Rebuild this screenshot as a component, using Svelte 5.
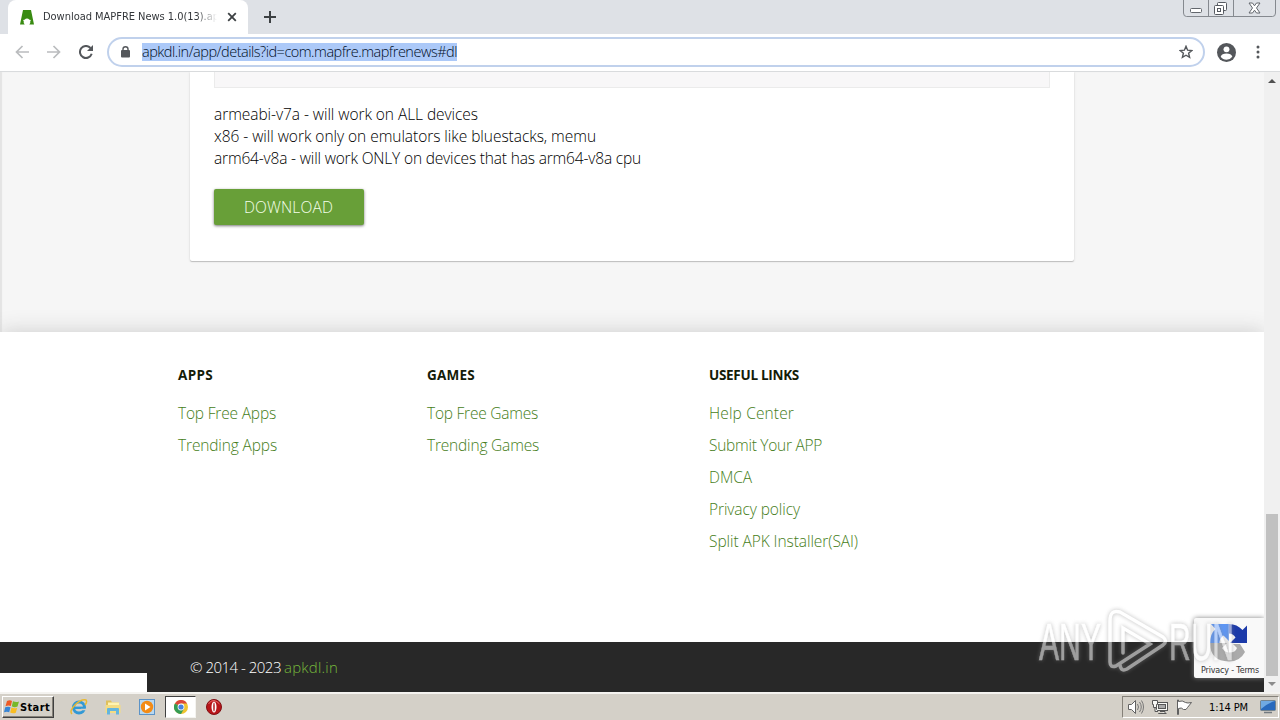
<script>
    const notes = [
        { text: "armeabi-v7a - will work on ALL devices", width: 264 },
        { text: "x86 - will work only on emulators like bluestacks, memu", width: 382 },
        { text: "arm64-v8a - will work ONLY on devices that has arm64-v8a cpu", width: 427 }
    ]

    const columns = [
        {
            title: "APPS",
            titleWidth: 35,
            links: [
                { text: "Top Free Apps", width: 98 },
                { text: "Trending Apps", width: 99 }
            ]
        },
        {
            title: "GAMES",
            titleWidth: 48,
            links: [
                { text: "Top Free Games", width: 111 },
                { text: "Trending Games", width: 112 }
            ]
        },
        {
            title: "USEFUL LINKS",
            titleWidth: 90,
            links: [
                { text: "Help Center", width: 85 },
                { text: "Submit Your APP", width: 113 },
                { text: "DMCA", width: 43 },
                { text: "Privacy policy", width: 91 },
                { text: "Split APK Installer(SAI)", width: 149 }
            ]
        }
    ]

    // spreads the letters so the text fills the given width
    function fit(node, width) {
        const natural = node.getBoundingClientRect().width
        node.style.letterSpacing = `${(width - natural) / node.textContent.length}px`
    }
</script>

<div class="screen">
    <header class="tabStrip">
        <div class="tab">
            <svg class="favicon" width="14" height="15" viewBox="0 0 14 15"><path d="M3 0h8l3 14.500H9.300q1.400-1.500 1-3.500l.7-1-1.500-.3Q7 7.500 4.500 9.700L3 10l.7 1q-.4 2 1 3.500H0z" fill="#398b12" /></svg>
            <div class="tabTitle"><span use:fit={176}>Download MAPFRE News 1.0(13).ap</span></div>
            <svg class="tabClose" width="10" height="10" viewBox="0 0 10 10"><path d="M1.200 1.200l7.600 7.600M8.800 1.200L1.200 8.800" stroke="#3c4043" stroke-width="1.800" /></svg>
        </div>
        <svg class="newTab" width="12" height="12" viewBox="0 0 12 12"><path d="M6 0v12M0 6h12" stroke="#3c4043" stroke-width="2" /></svg>
        <div class="windowButtons">
            <svg width="93" height="17" viewBox="0 0 93 17" fill="none" stroke="#85898f">
                <path d="M.5 0v13q0 3.500 3 3.500h86q3 0 3-3.500V0M25.500 0v16.500M50.500 0v16.500" />
                <rect x="7.500" y="8.500" width="11" height="4" rx="1" stroke="#63676d" fill="#fff" />
                <g stroke="#555960" fill="#fff"><rect x="34.500" y="2.500" width="9" height="8" rx="1" /><rect x="31.500" y="5.500" width="9" height="9" rx="1" /><rect x="34.500" y="8.500" width="3" height="3" /></g>
                <path d="M66 3h3.500l2 2.800 2-2.800H77l-3.500 5 3.500 5h-3.500l-2-2.800-2 2.800H66l3.500-5z" fill="#fff" stroke="#63676d" />
            </svg>
        </div>
    </header>

    <div class="toolbar">
        <svg class="nav" width="14" height="14" viewBox="0 0 14 14" fill="none" stroke="#babcbe" stroke-width="1.700"><path d="M14 7H1.500M7.500 1L1.500 7l6 6" /></svg>
        <svg class="nav" width="14" height="14" viewBox="0 0 14 14" fill="none" stroke="#babcbe" stroke-width="1.700"><path d="M0 7h12.500M6.500 1l6 6-6 6" /></svg>
        <svg class="reload" width="14" height="14" viewBox="0 0 14 14"><path d="M11.500 3A6 6 0 1 0 12.700 8.800" fill="none" stroke="#54575b" stroke-width="2" /><path d="M14 0v6H8z" fill="#54575b" /></svg>
        <div class="addressBar">
            <svg width="9" height="12" viewBox="0 0 9 12"><rect x="0" y="4" width="9" height="7.500" rx="1" fill="#54575b" /><path d="M2 5V3q0-2.300 2.500-2.300T7 3v2" fill="none" stroke="#54575b" stroke-width="1.400" /></svg>
            <span class="url" use:fit={315}>apkdl.in/app/details?id=com.mapfre.mapfrenews#dl</span>
            <svg class="star" width="14" height="14" viewBox="0 0 14 14"><path d="M7 1.300l1.600 3.900 4.200.3-3.200 2.700 1 4.200L7 10.200l-3.600 2.200 1-4.200-3.200-2.700 4.200-.3z" fill="none" stroke="#54575b" stroke-width="1.400" /></svg>
        </div>
        <svg class="profile" width="19" height="19" viewBox="0 0 18 18"><circle cx="9" cy="9" r="9" fill="#54575b" /><circle cx="9" cy="6" r="2.800" fill="#fff" /><path d="M3.500 13q1-3 5.500-3t5.500 3Q12.500 15.800 9 15.800T3.500 13" fill="#fff" /></svg>
        <svg class="menu" width="4" height="14" viewBox="0 0 4 14" fill="#54575b"><circle cx="2" cy="2" r="1.500" /><circle cx="2" cy="7" r="1.500" /><circle cx="2" cy="12" r="1.500" /></svg>
    </div>

    <div class="viewport">
        <main class="page">
            <div class="cardArea">
                <section class="card">
                    <div class="panelEnd"></div>
                    <div class="notes">
                        {#each notes as note}
                            <div><span use:fit={note.width}>{note.text}</span></div>
                        {/each}
                    </div>
                    <button class="download"><span use:fit={89}>DOWNLOAD</span></button>
                </section>
            </div>
            <footer>
                <div class="footerLinks">
                    {#each columns as column}
                        <div class="column">
                            <h6><span use:fit={column.titleWidth}>{column.title}</span></h6>
                            {#each column.links as link}
                                <div class="link"><span use:fit={link.width}>{link.text}</span></div>
                            {/each}
                        </div>
                    {/each}
                </div>
                <div class="copyright">
                    <span use:fit={91}>© 2014 - 2023</span>
                    <span class="site" use:fit={54}>apkdl.in</span>
                </div>
            </footer>
            <div class="statusBubble"></div>
            <div class="captcha">
                <svg width="38" height="38" viewBox="0 0 38 38">
                    <path d="M19 0q8 0 13.500 6L37 1.500V19H20l5.500-5.500Q23 9.500 19 9.500z" fill="#1c3aa9" />
                    <path d="M19 0v17l-5.500-5.500Q9.500 14 9.500 19H0Q0 10 5.500 5L1 0z" fill="#4285f4" opacity=".85" />
                    <path d="M0 19h17l-5 5q3 4.500 7.500 4.500 6 0 7.500-4.500l-4-4h7l5 8Q30 37.500 19 37.500 0 37 0 19" fill="#ababab" />
                </svg>
                <div class="terms"><span use:fit={58}>Privacy - Terms</span></div>
            </div>
        </main>
        <aside class="scrollbar">
            <svg width="8" height="4" viewBox="0 0 8 4"><path d="M0 4l4-4 4 4z" fill="#505050" /></svg>
            <div class="thumb"></div>
            <svg width="8" height="4" viewBox="0 0 8 4"><path d="M0 0l4 4 4-4z" fill="#8b8b8b" /></svg>
        </aside>
    </div>

    <div class="taskbar">
        <div class="start">
            <svg width="16" height="15" viewBox="0 0 16 15"><path d="M3 1q3-1.500 5 0L6.800 6Q4.500 5 1.500 6.200z" fill="#ee5a24" /><path d="M9 1.300q3 1.300 6 .2l-1.500 5Q10.500 8 7.800 6.300z" fill="#77b82a" /><path d="M1.200 7.300q3-1.300 5.300 0l-1.300 5Q3 11 0 12.300z" fill="#3785d5" /><path d="M7.500 7.600q3 1.400 5.700.2l-1.400 5q-3 1.200-5.600-.3z" fill="#f9bd22" /></svg>
            <span use:fit={30}>Start</span>
        </div>
        <div class="quickLaunch">
            <svg width="18" height="18" viewBox="0 0 18 18"><circle cx="9" cy="9.500" r="5.500" fill="none" stroke="#3299d5" stroke-width="3" /><path d="M5 9.800h10" stroke="#3299d5" stroke-width="2.400" /><path d="M11 11.500h6" stroke="#d4d0c8" stroke-width="1.500" /><path d="M2 16Q-1 13 5 7T16 2q1.500 2-1 5" fill="none" stroke="#e9b931" stroke-width="1.500" /></svg>
            <svg width="18" height="18" viewBox="0 0 18 18"><path d="M2 2.500h5l1 2h7v10H2z" fill="#dfc05c" /><path d="M4 4.500h11v5H4z" fill="#fff3b1" /><path d="M1.500 7h15v8h-15z" fill="#f4dc83" /><path d="M3 16.500V11q0-1 1-1h10q1 0 1 1v5.500h-3V13H6v3.500z" fill="#64b5de" /></svg>
            <svg width="18" height="18" viewBox="0 0 18 18"><rect x="1.500" y="1.500" width="15" height="15" fill="#b8d8f1" stroke="#5c93c7" /><circle cx="9" cy="9" r="6.200" fill="#f38b16" /><path d="M7 5.500l5.500 3.500L7 12.500z" fill="#fff" /></svg>
            <div class="active">
                <svg width="14" height="14" viewBox="0 0 14 14"><circle cx="7" cy="7" r="7" fill="#efc431" /><path d="M7 7L.9 3.500A7 7 0 0 1 13.100 3.500H7z" fill="#db463a" /><path d="M.9 3.500A7 7 0 0 0 7 14l3-5.300L7 7z" fill="#359c54" /><circle cx="7" cy="7" r="3.400" fill="#fff" /><circle cx="7" cy="7" r="2.600" fill="#4682df" /></svg>
            </div>
            <svg class="opera" width="16" height="16" viewBox="0 0 16 16"><circle cx="8" cy="8" r="7.500" fill="#b81519" stroke="#811015" /><path d="M2.500 5Q5 1 8 1.500T13.500 5" stroke="#e86666" fill="none" /><ellipse cx="8" cy="8" rx="2.500" ry="5.500" fill="#fff" /><ellipse cx="8" cy="8" rx=".9" ry="4.600" fill="#bd3b3f" /></svg>
        </div>
        <div class="tray">
            <svg width="16" height="16" viewBox="0 0 16 16" fill="#fff" stroke="#626262"><path d="M.5 5.500h3l4-4v13l-4-4h-3z" /><path d="M9.500 5q2 3 0 6M11.500 3q3.500 5 0 10M13.500 1.500q4 6.500 0 13" fill="none" stroke="#777" /></svg>
            <svg width="16" height="16" viewBox="0 0 16 16" fill="#f8f8f5" stroke="#565656"><rect x="4.500" y="3.500" width="11" height="8" /><rect x="6.500" y="5.500" width="7" height="4" fill="#aaa" /><path d="M8 12.500h5v2H6.500h8" /><path d="M.5 1.500h5v4h-1v3h-3v-3h-1zM3 9v3.500h3" /></svg>
            <svg width="16" height="16" viewBox="0 0 16 16" fill="#fff" stroke="#606060"><path d="M1.500 1v14.500h1V9.500q3-1.500 5 1 3 1 4-2l4-5q-4 1-6 0-3-2.500-7-1V1z" /></svg>
            <span class="clock" use:fit={39}>1:14 PM</span>
            <svg width="16" height="14" viewBox="0 0 16 14"><rect x=".5" y=".5" width="15" height="10" rx="1" fill="#2869bd" stroke="#73838f" /><path d="M1 1h14Q8 3 1 9z" fill="#6fa9e3" /><path d="M4 12.500h8" stroke="#727a80" stroke-width="1.500" /></svg>
        </div>
    </div>

    <svg class="watermark" width="208" height="68" viewBox="0 0 208 68">
        <text x="3" y="53" textLength="62" lengthAdjust="spacingAndGlyphs">ANY</text>
        <text x="133" y="53" textLength="65" lengthAdjust="spacingAndGlyphs">RUN</text>
        <path d="M87 46V21l27 16-34 22q-6 2-6-4V14q0-12 10-9l43 25q5 4 0 8L91 62q-6 3-7-4" />
    </svg>
</div>

<style>
    :global(body) {
        margin: 0;
        overflow: hidden;
    }

    .screen {
        position: relative;
        width: 1280px;
        height: 720px;
        display: flex;
        flex-direction: column;
        overflow: hidden;
        background: #fff;
        font-family: "Open Sans", "Noto Sans", sans-serif;
    }

    .screen * {
        box-sizing: border-box;
    }

    svg {
        display: block;
        flex: none;
    }

    span {
        white-space: nowrap;
    }

    .tabStrip {
        height: 34px;
        flex: none;
        display: flex;
        align-items: center;
        background: #dee1e6;
    }

    .tab {
        height: 34px;
        width: 240px;
        margin-left: 8px;
        padding: 0 11px 0 12px;
        display: flex;
        align-items: center;
        background: #fff;
        border-radius: 8px 8px 0 0;
    }

    .tabTitle {
        width: 174px;
        margin-left: 9px;
        overflow: hidden;
        font: 11px/16px "DejaVu Sans Condensed", "DejaVu Sans", sans-serif;
        color: #33363a;
        mask-image: linear-gradient(90deg, #000 88%, transparent);
    }

    .tabClose {
        margin-left: auto;
    }

    .newTab {
        margin-left: 16px;
    }

    .windowButtons {
        align-self: flex-start;
        margin-left: auto;
        margin-right: 4px;
    }

    .toolbar {
        height: 38px;
        flex: none;
        display: flex;
        align-items: center;
        padding: 0 20px 1px 15px;
        border-bottom: 1px solid #d9dbdd;
    }

    .nav {
        margin-right: 18px;
    }

    .addressBar {
        width: 1098px;
        height: 30px;
        margin-left: 14px;
        padding: 0 10px 0 12px;
        display: flex;
        align-items: center;
        border: 2px solid #c0d1ec;
        border-radius: 15px;
    }

    .url {
        margin-left: 12px;
        font-size: 14.5px;
        line-height: 18px;
        font-weight: 300;
        color: #000d26;
        background: #acc9f8;
    }

    .star {
        margin-left: auto;
    }

    .profile {
        margin-left: 12px;
    }

    .menu {
        margin-left: auto;
    }

    .viewport {
        height: 620px;
        flex: none;
        display: flex;
    }

    .page {
        position: relative;
        width: 1264px;
        height: 620px;
        overflow: hidden;
        background: #f6f6f6;
        box-shadow: inset 2px 0 1px #e4e4e4;
    }

    .cardArea {
        height: 260px;
    }

    .card {
        width: 884px;
        height: 189px;
        margin-left: 190px;
        padding: 0 24px;
        background: #fff;
        border-radius: 0 0 2px 2px;
        box-shadow: 0 1px 1px #bdbdbd, 0 0 3px #dedede;
    }

    .panelEnd {
        height: 16px;
        background: #f8f7f8;
        border: 1px solid #ebebeb;
        border-top: 0;
    }

    .notes {
        padding-top: 15px;
        font-size: 15.5px;
        line-height: 22px;
        font-weight: 300;
        color: #000;
    }

    .download {
        display: flex;
        align-items: center;
        justify-content: center;
        width: 150px;
        height: 36px;
        margin-top: 20px;
        padding: 0 1px 0 0;
        border: 0;
        border-radius: 2px;
        background: #689f38;
        box-shadow: 0 1px 3px #777;
        color: #f5ffeb;
        font: 300 15.5px "Open Sans", sans-serif;
    }

    footer {
        height: 360px;
        background: #fff;
        box-shadow: 0 0 20px #ccc;
    }

    .footerLinks {
        height: 310px;
        padding: 32px 0 0 178px;
        display: flex;
    }

    .column {
        width: 282px;
    }

    .column:first-child {
        width: 249px;
    }

    h6 {
        margin: 0 0 11px;
        font-size: 13.5px;
        line-height: 22px;
        font-weight: 700;
        color: #141c08;
    }

    .link {
        height: 32px;
        font-size: 15.5px;
        line-height: 32px;
        font-weight: 300;
        color: #457d18;
    }

    .copyright {
        height: 50px;
        padding-left: 190px;
        display: flex;
        gap: 3px;
        background: #282828;
        font-size: 15px;
        line-height: 51px;
        font-weight: 300;
        color: #fff;
    }

    .site {
        color: #76b83b;
    }

    .statusBubble {
        position: absolute;
        left: 0;
        bottom: 0;
        width: 147px;
        height: 19px;
        background: #fff;
    }

    .captcha {
        position: absolute;
        right: 0;
        bottom: 14px;
        width: 70px;
        height: 60px;
        padding: 6px 0 0 6px;
        background: #f9f9f9;
        border-radius: 2px 0 0 2px;
        box-shadow: 0 0 5px #808080;
    }

    .captcha svg {
        margin-left: 10px;
    }

    .terms {
        height: 12px;
        margin-top: 3px;
        padding-left: 1px;
        font: 8px/12px "DejaVu Sans", sans-serif;
        color: #333;
    }

    .scrollbar {
        width: 16px;
        display: flex;
        flex-direction: column;
        align-items: center;
        justify-content: space-between;
        padding: 7px 0 6px;
        background: #f0f0f0;
    }

    .thumb {
        width: 12px;
        height: 162px;
        margin-top: auto;
        margin-bottom: 6px;
        background: #c1c1c1;
    }

    .taskbar {
        height: 28px;
        flex: none;
        display: flex;
        align-items: center;
        padding-left: 2px;
        background: #d4d0c8;
        box-shadow: inset 0 2px #f4f3f0;
    }

    .start {
        width: 52px;
        height: 22px;
        margin-top: 2px;
        display: flex;
        align-items: center;
        padding-left: 1px;
        border: 1px solid #fff;
        border-right-color: #404040;
        border-bottom-color: #404040;
        box-shadow: inset -1px -1px #858179;
        font: 700 11px "DejaVu Sans Condensed", "DejaVu Sans", sans-serif;
        color: #000;
    }

    .quickLaunch {
        display: flex;
        align-items: center;
        gap: 16px;
        margin: 2px 0 0 16px;
    }

    .active {
        width: 31px;
        height: 22px;
        margin-left: -7px;
        display: flex;
        align-items: center;
        justify-content: center;
        background: #fff;
        border: 1px solid #858179;
        border-top-color: #404040;
        border-left-color: #404040;
        border-right-color: #f4f3f0;
        border-bottom-color: #f4f3f0;
    }

    .opera {
        margin-left: -6px;
    }

    .tray {
        width: 157px;
        height: 22px;
        margin: 2px 1px 0 auto;
        padding-left: 5px;
        display: flex;
        align-items: center;
        gap: 8px;
        border: 1px solid #858179;
        border-right-color: #fff;
        border-bottom-color: #fff;
        font: 11px "DejaVu Sans Condensed", "DejaVu Sans", sans-serif;
        color: #000;
    }

    .clock {
        margin: 0 4px 0 9px;
    }

    .watermark {
        position: absolute;
        left: 1036px;
        top: 607px;
        opacity: 0.55;
        filter: drop-shadow(0 0 2px #888);
    }

    .watermark text {
        font: 400 51px "Liberation Sans", Arial, sans-serif;
        fill: #fff;
        stroke: #fff;
        stroke-width: 0.6;
    }

    .watermark path {
        fill: none;
        stroke: #fff;
        stroke-width: 3.5;
        stroke-linecap: round;
    }
</style>
